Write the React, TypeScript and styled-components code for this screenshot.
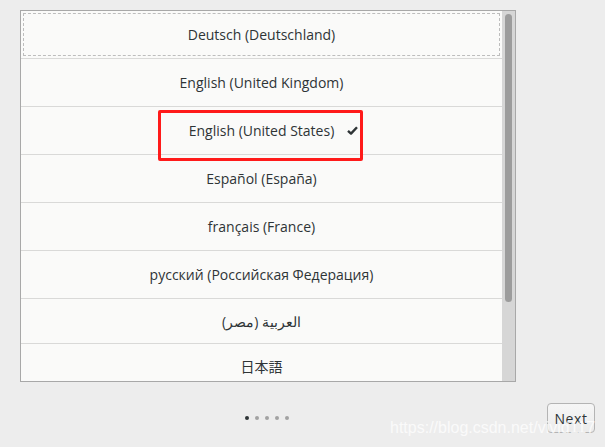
import React from "react";
import styled, { createGlobalStyle } from "styled-components";

const Global = createGlobalStyle`
  html, body { margin: 0; padding: 0; background: #ededed; }
  body { font-family: "Open Sans", "Noto Sans", "Noto Sans CJK JP", sans-serif; }
`;

const Page = styled.div`
  position: relative;
  width: 605px;
  height: 447px;
  overflow: hidden;
  background: #ededed;
  display: flex;
  flex-direction: column;
`;

const Frame = styled.div`
  margin: 10px 0 0 20px;
  width: 494px;
  height: 370px;
  border: 1px solid #a8a8a8;
  background: #fafaf9;
  display: flex;
  overflow: hidden;
`;

const List = styled.div`
  flex: 1;
  display: flex;
  flex-direction: column;
  overflow: hidden;
`;

const Row = styled.div<{ $h: number; $focus?: boolean }>`
  position: relative;
  flex: 0 0 auto;
  height: ${(p) => p.$h}px;
  border-bottom: 1px solid #d9d9d8;
  display: grid;
  grid-template-columns: 1fr auto 1fr;
  align-items: center;
  color: #2e3436;
  font-size: 14px;
  &::after {
    content: "";
    display: ${(p) => (p.$focus ? "block" : "none")};
    position: absolute;
    left: 2px;
    right: 2px;
    top: 2px;
    bottom: 2px;
    border: 1px dashed #bdbdbd;
  }
`;

const Label = styled.span`
  grid-column: 2;
  white-space: nowrap;
`;

const Check = styled.span`
  grid-column: 3;
  justify-self: start;
  margin-left: 13px;
  display: flex;
  align-items: center;
`;

const Trough = styled.div`
  width: 13px;
  background: #d6d6d6;
  padding: 3px 3px 0 3px;
  box-sizing: border-box;
`;

const Thumb = styled.div`
  width: 7px;
  height: 288px;
  border-radius: 4px;
  background: #9c9c9c;
`;

const Footer = styled.div`
  display: flex;
  align-items: center;
  margin-top: 21px;
  height: 30px;
`;

const Dots = styled.div`
  display: flex;
  gap: 6px;
  margin-left: 245px;
`;

const Dot = styled.span<{ $active?: boolean }>`
  width: 4px;
  height: 4px;
  border-radius: 50%;
  background: ${(p) => (p.$active ? "#2e3436" : "#a2a2a2")};
`;

const NextButton = styled.button`
  margin-left: auto;
  margin-right: 10px;
  width: 48px;
  height: 30px;
  border: 1px solid #b4b4b4;
  border-radius: 4px;
  background: linear-gradient(#f6f6f6, #ebebeb);
  color: #2e3436;
  font-family: "Open Sans", "Noto Sans", sans-serif;
  font-size: 14px;
  letter-spacing: 0.6px;
  padding: 0;
`;

const Annotation = styled.div`
  position: absolute;
  left: 158px;
  top: 110px;
  width: 205px;
  height: 51px;
  box-sizing: border-box;
  border: 3px solid #ff1a1a;
  border-radius: 2px;
  pointer-events: none;
`;

const Watermark = styled.div`
  position: absolute;
  left: 390px;
  top: 419px;
  font-family: "Liberation Sans", Arial, sans-serif;
  font-size: 16px;
  color: rgba(255, 255, 255, 0.75);
  white-space: nowrap;
  pointer-events: none;
`;

const CheckIcon = () => (
  <svg width="11" height="9" viewBox="0 0 11 9">
    <path d="M1 4.8 L4 7.6 L10 1.2" fill="none" stroke="#2e3436" strokeWidth="2.4" strokeLinejoin="round" />
  </svg>
);

const languages: { name: string; h: number; focus?: boolean; checked?: boolean }[] = [
  { name: "Deutsch (Deutschland)", h: 47, focus: true },
  { name: "English (United Kingdom)", h: 47 },
  { name: "English (United States)", h: 47, checked: true },
  { name: "Español (España)", h: 47 },
  { name: "français (France)", h: 47 },
  { name: "русский (Российская Федерация)", h: 47 },
  { name: "العربية (مصر)", h: 44 },
  { name: "日本語", h: 44 },
];

export default function App() {
  return (
    <>
      <Global />
      <Page>
        <Frame>
          <List>
            {languages.map((l) => (
              <Row key={l.name} $h={l.h} $focus={l.focus}>
                <Label>{l.name}</Label>
                {l.checked && (
                  <Check>
                    <CheckIcon />
                  </Check>
                )}
              </Row>
            ))}
          </List>
          <Trough>
            <Thumb />
          </Trough>
        </Frame>
        <Footer>
          <Dots>
            <Dot $active />
            <Dot />
            <Dot />
            <Dot />
            <Dot />
          </Dots>
          <NextButton>Next</NextButton>
        </Footer>
        <Annotation />
        <Watermark>https://blog.csdn.net/vivid117</Watermark>
      </Page>
    </>
  );
}
